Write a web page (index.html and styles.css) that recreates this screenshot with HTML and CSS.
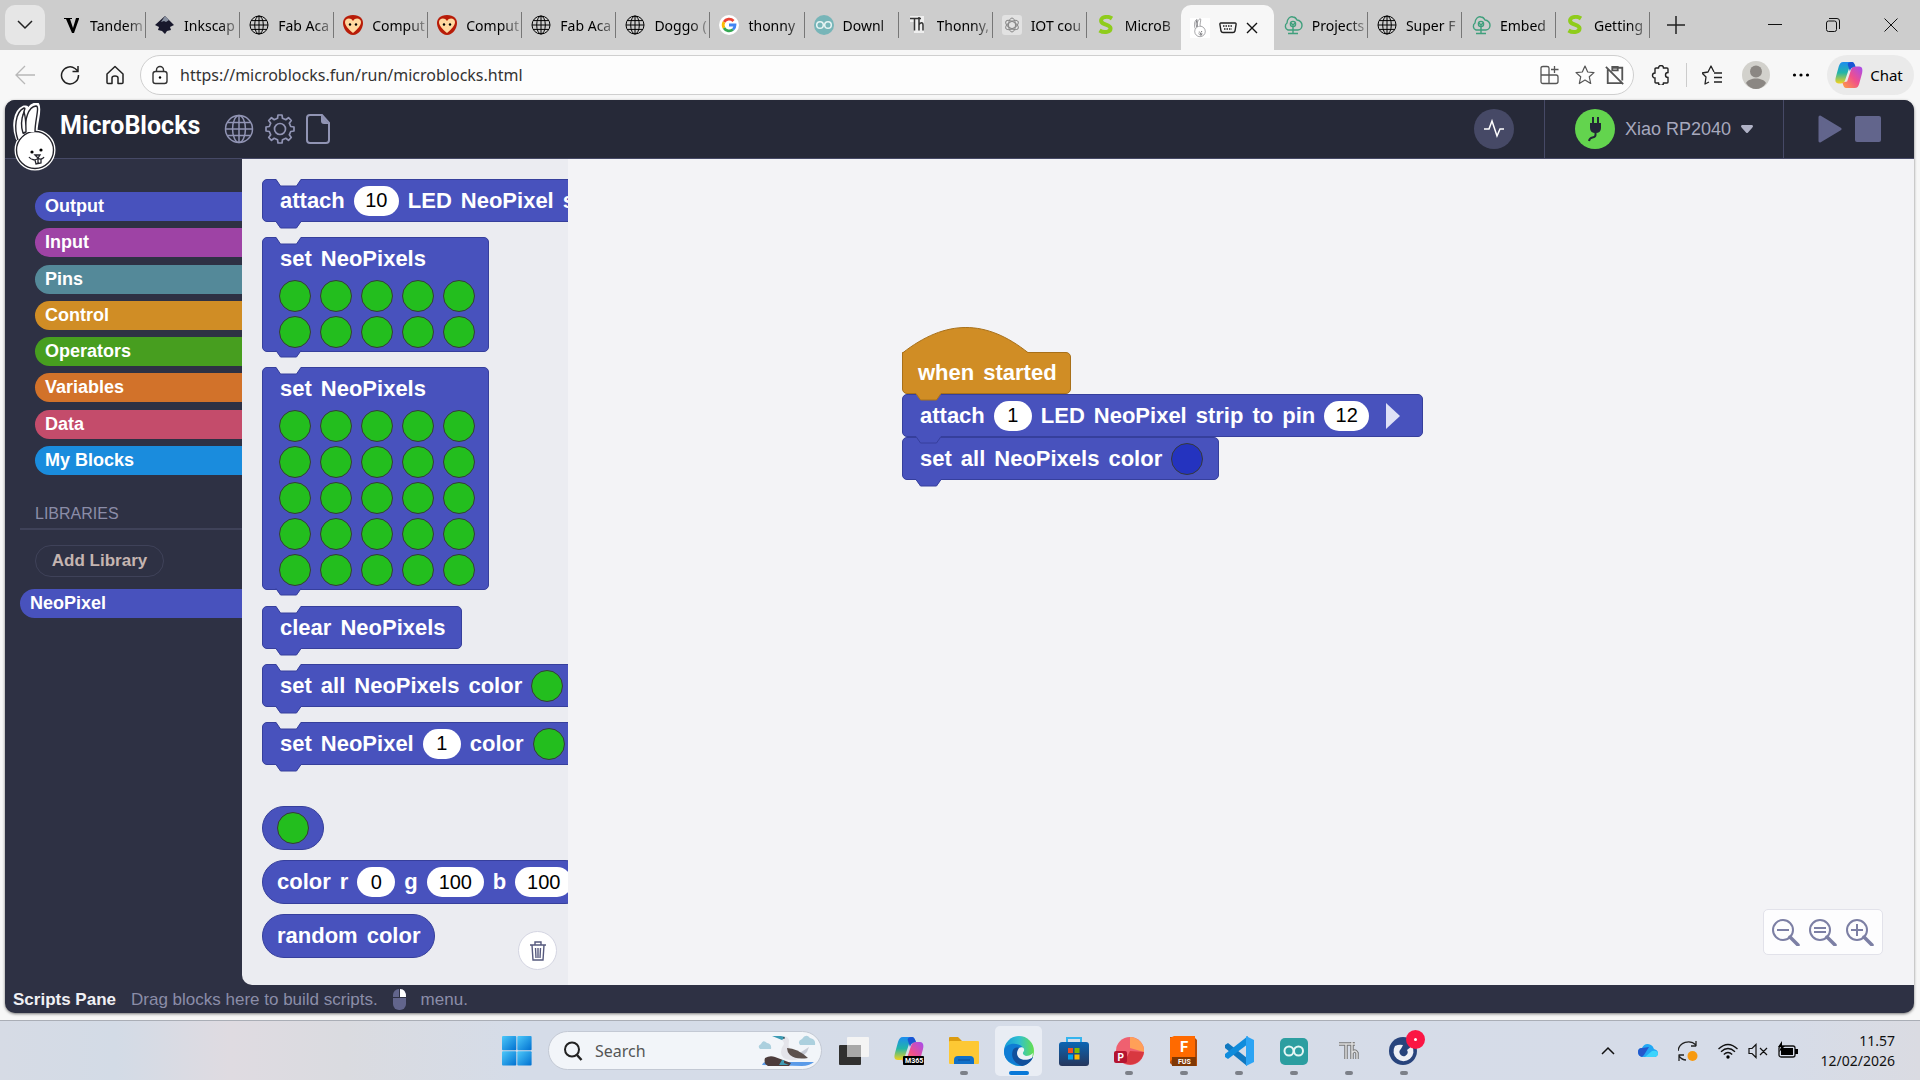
FILE: index.html
```
<!DOCTYPE html>
<html lang="en">
<head>
    <meta charset="UTF-8">
    <meta name="viewport" content="width=device-width, initial-scale=1.0">
    <title>MicroBlocks</title>
    <link rel="stylesheet" href="styles.css">
</head>
<body>
    <!-- shared icon shapes -->
    <svg class="defs" aria-hidden="true">
        <symbol id="globe" viewBox="0 0 20 20"><g fill="none" stroke="currentColor"><circle cx="10" cy="10" r="9"/><ellipse cx="10" cy="10" rx="4.3" ry="9"/><path d="M10 1v18M1 10h18M2.2 5.6h15.6M2.2 14.4h15.6"/></g></symbol>
        <symbol id="heart" viewBox="0 0 20 20"><path d="M10 0C3 0 0 4 0 8c0 5 4 12 10 12s10-7 10-12c0-4-3-8-10-8z" fill="#b81c08"/><path d="M10 18C5 14 2 10 2 7c0-4 6-5 8-1 2-4 8-3 8 1 0 3-3 7-8 11z" fill="#ffd9a0"/><circle cx="7" cy="9.5" r="1.2"/><circle cx="13" cy="9.5" r="1.2"/></symbol>
        <symbol id="tree" viewBox="0 0 20 20"><g fill="none" stroke="#3f9f7c" stroke-width="1.4"><path d="M5 15a4 4 0 0 1-1-7C4 4 7 1 10 2c2 0 3 1 4 3 3 0 5 3 5 5s-1 5-4 5z"/><circle cx="10" cy="9" r="2.6"/><path d="M10 9v10M5 18.5h10M8 8l2 2 2-2"/></g></symbol>
        <symbol id="s-logo" viewBox="0 0 20 20"><path d="M16 3.500C13 1.500 11 1.500 9 2 5.500 2.500 4.500 5 5.500 7c1.500 3 8.500 2.500 9 6 .4 4-6 5.500-11 2.500" fill="none" stroke="#8fcc1c" stroke-width="4"/></symbol>
        <symbol id="copilot" viewBox="0 0 30 30"><path d="M9 1h9c2 0 3 2 4 6l-7 1-4 12c-1 3-2 4-5 4H4c-4 0-4-3-3-7L4 6c1-3 2-5 5-5z" fill="url(#cpBlue)"/><path d="M21 29h-9c-2 0-3-2-4-6l5-1 4-12c1-3 2-4 5-4h4c3 0 4 3 3 7l-3 11c-1 3-2 5-5 5z" fill="url(#cpPink)"/><path d="M18 1c2 0 3 2 4 5-4 0-5 2-6 5l-2-6c-1-3 1-4 4-4z" fill="#1a55d4"/></symbol>
        <symbol id="mag" viewBox="0 0 28 28"><circle cx="11" cy="12" r="10" fill="none" stroke="currentColor" stroke-width="2"/><path d="M18 19l8 8" stroke="currentColor" stroke-width="3.500" stroke-linecap="round"/></symbol>
        <symbol id="bunny" viewBox="0 0 44 70">
            <g fill="#fff" stroke="#fff" stroke-width="5" stroke-linejoin="round"><path d="M5 35C1 24 2 9 11 5l2 0 1 8c2-8 6-11 10-11 3 5-2 17-2 27z"/><circle cx="22" cy="47" r="18"/></g>
            <g fill="#fff" stroke="#25252d" stroke-width="1.400" stroke-linejoin="round"><circle cx="22" cy="47" r="18.500"/><path d="M5 37C1 26 2 9 11 5c2 0 0 2 0 4-3 8-2 14 0 22M12 29C12 16 15 4 23 3c4 0-1 14-1 26"/><path d="M11 9c2 6 2 14 2 20l-3 1C7 21 9 14 11 9z"/></g>
            <circle cx="19" cy="49" r="1.600"/><circle cx="28" cy="47" r="1.600"/><path d="M16 54c2 3 7 4 9 1 2 2 5 1 6-1M22 52l3 3 2-3zM22 57l1 4 5-1v-4M25 55v5" fill="none" stroke="#25252d" stroke-width="1.300"/>
        </symbol>
        <symbol id="tab" viewBox="0 0 27 8"><path d="M1 0v1l4.500 6h16L26 1V0z" fill="var(--fill)"/><path d="M1 .5L5.500 7h16L26 .5" fill="none" stroke="var(--edge)"/></symbol>
        <symbol id="notch" viewBox="0 0 27 8"><path d="M1 0L5.500 7h16L26 0z" fill="#ebecf1"/><path d="M1 .5L5.500 7h16L26 .5" fill="none" stroke="var(--edge)"/></symbol>
        <linearGradient id="cpBlue" x1="0" y1="0" x2="0" y2="1"><stop offset="0" stop-color="#1c8cf0"/><stop offset=".5" stop-color="#22b5a8"/><stop offset="1" stop-color="#f4d21c"/></linearGradient>
        <linearGradient id="cpPink" x1="1" y1="0" x2="0" y2="1"><stop offset="0" stop-color="#a44cf0"/><stop offset=".5" stop-color="#f0508c"/><stop offset="1" stop-color="#ffa040"/></linearGradient>
        <linearGradient id="winBlue" x1="0" y1="0" x2="1" y2="1"><stop offset="0" stop-color="#4cc8fa"/><stop offset="1" stop-color="#0070d0"/></linearGradient>
        <linearGradient id="edgeTop" x1="0" y1="0" x2="1" y2="0"><stop offset="0" stop-color="#1598d8"/><stop offset=".5" stop-color="#30c0d0"/><stop offset="1" stop-color="#66e04c"/></linearGradient>
        <linearGradient id="storeBg" x1="0" y1="0" x2="0" y2="1"><stop offset="0" stop-color="#0a65b4"/><stop offset="1" stop-color="#26365c"/></linearGradient>
    </svg>

    <div class="tabstrip">
        <button class="tab-menu" aria-label="Tab actions"><svg width="18" height="12" viewBox="0 0 18 12"><path d="M2 2l7 7 7-7" fill="none" stroke="#222" stroke-width="1.500"/></svg></button>
        <nav class="tabs">
            <button class="tab"><svg viewBox="0 0 20 20"><path d="M3 3h8v1H9l3 9 3-10h3v1l-5 14h-2L5 4H3z"/></svg><span>Tandem</span></button>
            <button class="tab"><svg viewBox="0 0 20 20"><path d="M10 1l9 9-4 2 1 3-4 1-2 3-3-3-4-1 1-3-4-2z" fill="#18182c"/><path d="M10 1l4 4-3 2-2-1-3 1z" fill="#8890a0"/></svg><span>Inkscap</span></button>
            <button class="tab"><svg><use href="#globe"/></svg><span>Fab Aca</span></button>
            <button class="tab"><svg><use href="#heart"/></svg><span>Comput</span></button>
            <button class="tab"><svg><use href="#heart"/></svg><span>Comput</span></button>
            <button class="tab"><svg><use href="#globe"/></svg><span>Fab Aca</span></button>
            <button class="tab"><svg><use href="#globe"/></svg><span>Doggo (</span></button>
            <button class="tab"><svg viewBox="0 0 20 20"><circle cx="10" cy="10" r="10" fill="#fff"/><g fill="none" stroke-width="2.800"><path d="M14.500 6A6 6 0 0 0 5 7" stroke="#ea4335"/><path d="M5 7a6 6 0 0 0 0 6" stroke="#fbbc05"/><path d="M5 13a6 6 0 0 0 9 1.500" stroke="#34a853"/><path d="M14 14.500A6 6 0 0 0 16 10h-6" stroke="#4285f4"/></g></svg><span>thonny</span></button>
            <button class="tab"><svg viewBox="0 0 20 20"><circle cx="10" cy="10" r="10" fill="#77b5b8"/><g fill="none" stroke="#e8f4f4" stroke-width="1.500"><circle cx="6" cy="10" r="3.300"/><circle cx="14" cy="10" r="3.300"/></g></svg><span>Downl</span></button>
            <button class="tab"><svg viewBox="0 0 20 20"><path d="M2 1h14v17H6V7H2z" fill="#eee"/><path d="M2 3.500h11M6.500 3.500v12M11 2v13.500M11 10c1-3 4-3 4 0v5.500" fill="none" stroke="#333" stroke-width="1.500"/></svg><span>Thonny,</span></button>
            <button class="tab"><svg viewBox="0 0 20 20"><rect width="20" height="20" rx="3" fill="#e2e2e2"/><g fill="none" stroke="#888"><ellipse cx="10" cy="10" rx="3.500" ry="7"/><ellipse cx="10" cy="10" rx="3.500" ry="7" transform="rotate(60 10 10)"/><ellipse cx="10" cy="10" rx="3.500" ry="7" transform="rotate(120 10 10)"/></g></svg><span>IOT cou</span></button>
            <button class="tab last"><svg><use href="#s-logo"/></svg><span>MicroB</span></button>
            <button class="tab active" aria-label="MicroBlocks, serial port open"><svg class="favicon"><use href="#bunny"/></svg><svg class="serial" viewBox="0 0 18 12"><path d="M2 1h14q1.500 0 1 2l-1 6q-.5 1.500-2 1.500H4q-1.500 0-2-1.500L1 3Q.5 1 2 1z" fill="none" stroke="#222" stroke-width="1.400"/><path d="M4 4h10M5 7h8" stroke="#222" stroke-width="1.500" stroke-dasharray="1.500 1"/></svg><svg class="close" viewBox="0 0 12 12"><path d="M1 1l10 10M11 1L1 11" stroke="#111" stroke-width="1.400"/></svg></button>
            <button class="tab"><svg><use href="#tree"/></svg><span>Projects</span></button>
            <button class="tab"><svg><use href="#globe"/></svg><span>Super F</span></button>
            <button class="tab"><svg><use href="#tree"/></svg><span>Embed</span></button>
            <button class="tab"><svg><use href="#s-logo"/></svg><span>Getting</span></button>
        </nav>
        <button class="new-tab" aria-label="New tab"><svg width="18" height="18" viewBox="0 0 18 18"><path d="M9 0v18M0 9h18" stroke="#222" stroke-width="1.500"/></svg></button>
        <div class="window-buttons">
            <button aria-label="Minimize"><svg width="14" height="14" viewBox="0 0 14 14"><path d="M0 6.500h14" stroke="#111"/></svg></button>
            <button aria-label="Restore"><svg width="14" height="14" viewBox="0 0 14 14"><g fill="none" stroke="#111"><rect x=".5" y="3" width="10" height="10.500" rx="2"/><path d="M3 .5h8q2.500 0 2.500 2.500v8"/></g></svg></button>
            <button aria-label="Close"><svg width="14" height="14" viewBox="0 0 14 14"><path d="M.5.5l13 13M13.500.5l-13 13" stroke="#111"/></svg></button>
        </div>
    </div>

    <div class="toolbar">
        <button class="nav-btn" aria-label="Back"><svg viewBox="0 0 20 20"><path d="M20 10H1M10 1l-9 9 9 9" fill="none" stroke="#b8b8b8" stroke-width="1.300"/></svg></button>
        <button class="nav-btn" aria-label="Refresh"><svg viewBox="0 0 20 20"><path d="M18.500 10A8.500 8.500 0 1 1 15 3.500L18 6M18 1v5.500h-5.500" fill="none" stroke="#222" stroke-width="1.500"/></svg></button>
        <button class="nav-btn" aria-label="Home"><svg viewBox="0 0 20 20"><path d="M2 9l8-7.500L18 9v8.500q0 1-1 1h-4V13q0-2-3-2t-3 2v5.500H3q-1 0-1-1z" fill="none" stroke="#222" stroke-width="1.500" stroke-linejoin="round"/></svg></button>
        <div class="address">
            <svg viewBox="0 0 20 20"><g fill="none" stroke="#333" stroke-width="1.400"><rect x="3" y="6.500" width="14" height="12" rx="2.500"/><path d="M6.500 6.500V5a3.500 3.500 0 0 1 7 0v1.500"/></g><circle cx="10" cy="12.500" r="1.200"/></svg>
            <input type="text" aria-label="Address" value="https://microblocks.fun/run/microblocks.html">
            <svg viewBox="0 0 20 20"><path d="M9 18.500H3q-2 0-2-2V3q0-1.500 2-1.500h4q2 0 2 1.500zM1 10h15q2 0 2 2v4.500q0 2-2 2H9M14.500 1v7M11 4.500h7.500" fill="none" stroke="#555" stroke-width="1.300"/></svg>
            <svg class="star" viewBox="0 0 20 20"><path d="M10 1l2.700 6 6.300.600-4.700 4.200 1.400 6.700L10 15l-5.700 3.500 1.400-6.700L1 7.600 7.300 7z" fill="none" stroke="#555" stroke-width="1.200" stroke-linejoin="round"/></svg>
            <svg viewBox="0 0 22 22"><path d="M3 5v15h15M8 3h11v14M1 2l19 19M8 2h6v4H8z" fill="none" stroke="#555" stroke-width="2"/></svg>
        </div>
        <div class="tools">
            <svg viewBox="0 0 20 20"><path d="M5 3h2.500a2.500 2.500 0 0 1 5 0H16q1 0 1 1v3.500a2 2 0 0 0 0 5V17q0 1-1 1h-3.500a2.500 2.500 0 0 1-5 0H5q-1 0-1-1v-4a2.500 2.500 0 0 1 0-5V4q0-1 1-1z" fill="none" stroke="#222" stroke-width="1.400"/></svg>
            <i class="rule"></i>
            <svg viewBox="0 0 20 20"><path d="M7 17l-4 2 1-7-4-4 6-1 3-6 3 6M12 8h8M12 12.500h8M12 17h8" fill="none" stroke="#222" stroke-width="1.300" stroke-linejoin="round"/></svg>
            <svg class="avatar" viewBox="0 0 28 28"><circle cx="14" cy="14" r="14" fill="#d2d1cc"/><circle cx="14" cy="10.500" r="6" fill="#8b8783"/><path d="M4 22c3-6 17-6 20 0-5 8-15 8-20 0z" fill="#8b8783"/></svg>
            <svg viewBox="0 0 20 20"><circle cx="3.500" cy="10" r="1.600"/><circle cx="10" cy="10" r="1.600"/><circle cx="16.500" cy="10" r="1.600"/></svg>
        </div>
        <button class="chat"><svg width="28" height="28"><use href="#copilot"/></svg>Chat</button>
    </div>

    <main class="app">
        <header class="topbar">
            <svg class="logo"><use href="#bunny"/></svg>
            <h1>MicroBlocks</h1>
            <div class="menu-icons">
                <button aria-label="Language"><svg width="30" height="30"><use href="#globe"/></svg></button>
                <button aria-label="Settings"><svg width="30" height="30" viewBox="0 0 30 30"><g fill="none" stroke="currentColor" stroke-width="1.700" stroke-linejoin="round"><circle cx="15" cy="15" r="5.500"/><path d="M12.500 4.300L13 1h4l.5 3.300 3.300 1.400 2.700-2 2.800 2.800-2 2.700 1.400 3.300L29 13v4l-3.300.5-1.400 3.300 2 2.700-2.800 2.800-2.700-2-3.300 1.400L17 29h-4l-.5-3.300-3.300-1.400-2.700 2-2.800-2.800 2-2.700-1.400-3.300L1 17v-4l3.300-.5 1.400-3.300-2-2.700 2.800-2.800 2.700 2z"/></g></svg></button>
                <button aria-label="File"><svg width="24" height="30" viewBox="0 0 24 30"><path d="M4 1h12l7 8v17q0 3-3 3H4q-3 0-3-3V4q0-3 3-3z" fill="none" stroke="currentColor" stroke-width="2"/><path d="M15 1v6q0 3 3 3h5z" fill="currentColor"/></svg></button>
            </div>
            <div class="graph"><button class="round" aria-label="Graph"><svg width="24" height="24" viewBox="0 0 24 24"><path d="M2 12h5l3-8 5 15 3-7h4" fill="none" stroke="#fff" stroke-width="1.500"/></svg></button></div>
            <button class="board"><span class="round green"><svg width="20" height="26" viewBox="0 0 20 26"><path d="M8 1v6M13 1v6M10.500 16v3q0 2-3 2.500T4 25" fill="none" stroke="#222638" stroke-width="2"/><path d="M5 7h11v5q0 5-5.500 5T5 12z" fill="#222638"/></svg></span>Xiao RP2040<svg width="12" height="8" viewBox="0 0 12 8"><path d="M1 0h10q2 1 0 3L7 7.500q-1 1-2 0L1 3Q-1 1 1 0z" fill="#b0b2c6"/></svg></button>
            <div class="run">
                <button aria-label="Start"><svg width="26" height="28" viewBox="0 0 26 28"><path d="M3 2l20 12L3 26z" fill="currentColor" stroke="currentColor" stroke-width="3" stroke-linejoin="round"/></svg></button>
                <button aria-label="Stop"><svg width="26" height="26" viewBox="0 0 26 26"><rect width="26" height="26" rx="2" fill="currentColor"/></svg></button>
            </div>
        </header>

        <div class="workspace">
            <aside class="sidebar">
                <div class="categories">
                    <button class="category output">Output</button>
                    <button class="category input">Input</button>
                    <button class="category pins">Pins</button>
                    <button class="category control">Control</button>
                    <button class="category operators">Operators</button>
                    <button class="category variables">Variables</button>
                    <button class="category data">Data</button>
                    <button class="category my-blocks">My Blocks</button>
                </div>
                <h2>LIBRARIES</h2>
                <button class="add-library">Add Library</button>
                <button class="category output">NeoPixel</button>
            </aside>

            <div class="panes">
                <section class="palette">
                    <div class="block"><svg class="notch"><use href="#notch"/></svg><span>attach</span><input class="num w2" aria-label="LED count" value="10"><span>LED</span><span>NeoPixel</span><span>s</span><svg class="peg"><use href="#tab"/></svg></div>
                    <div class="block tall"><svg class="notch"><use href="#notch"/></svg>
                        <div class="words"><span>set</span><span>NeoPixels</span></div>
                        <div class="pixels"><i></i><i></i><i></i><i></i><i></i><i></i><i></i><i></i><i></i><i></i></div>
                        <svg class="peg"><use href="#tab"/></svg></div>
                    <div class="block tall"><svg class="notch"><use href="#notch"/></svg>
                        <div class="words"><span>set</span><span>NeoPixels</span></div>
                        <div class="pixels"><i></i><i></i><i></i><i></i><i></i><i></i><i></i><i></i><i></i><i></i><i></i><i></i><i></i><i></i><i></i><i></i><i></i><i></i><i></i><i></i><i></i><i></i><i></i><i></i><i></i></div>
                        <svg class="peg"><use href="#tab"/></svg></div>
                    <div class="block"><svg class="notch"><use href="#notch"/></svg><span>clear</span><span>NeoPixels</span><svg class="peg"><use href="#tab"/></svg></div>
                    <div class="block"><svg class="notch"><use href="#notch"/></svg><span>set</span><span>all</span><span>NeoPixels</span><span>color</span><button class="color" aria-label="Color"></button><svg class="peg"><use href="#tab"/></svg></div>
                    <div class="block"><svg class="notch"><use href="#notch"/></svg><span>set</span><span>NeoPixel</span><input class="num w1" aria-label="Pixel" value="1"><span>color</span><button class="color" aria-label="Color"></button><svg class="peg"><use href="#tab"/></svg></div>
                    <div class="reporters">
                        <div class="block reporter"><button class="color" aria-label="Color"></button></div>
                        <div class="block reporter"><span>color</span><span>r</span><input class="num w1" aria-label="Red" value="0"><span>g</span><input class="num w3" aria-label="Green" value="100"><span>b</span><input class="num w3" aria-label="Blue" value="100"></div>
                        <div class="block reporter"><span>random</span><span>color</span></div>
                    </div>
                    <button class="trash" aria-label="Trash"><svg width="18" height="20" viewBox="0 0 18 20"><path d="M1 4h16M6 4V1h6v3M3 4l1 15h10l1-15M6.500 7l.5 10M9 7v10M11.500 7l-.5 10" fill="none" stroke="#56597e" stroke-width="1.400"/></svg></button>
                </section>

                <section class="scripts">
                    <div class="script">
                        <svg class="dome" width="127" height="26" viewBox="0 0 127 26"><path d="M.5 26C44-8 84-8 126.500 26z" fill="#d08d25"/><path d="M.5 26C44-8 84-8 126.500 26" fill="none" stroke="#a8701a"/></svg>
                        <div class="block hat"><span>when</span><span>started</span><svg class="peg"><use href="#tab"/></svg></div>
                        <div class="block"><span>attach</span><input class="num w1" aria-label="LED count" value="1"><span>LED</span><span>NeoPixel</span><span>strip</span><span>to</span><span>pin</span><input class="num w2" aria-label="Pin" value="12"><button class="expand" aria-label="More options"><svg width="14" height="26" viewBox="0 0 14 26"><path d="M0 0l14 13L0 26z" fill="#dfe1f6"/></svg></button><svg class="peg"><use href="#tab"/></svg></div>
                        <div class="block"><span>set</span><span>all</span><span>NeoPixels</span><span>color</span><button class="color blue" aria-label="Color"></button><svg class="peg"><use href="#tab"/></svg></div>
                    </div>
                    <div class="zoom">
                        <button aria-label="Zoom out"><svg viewBox="0 0 28 28"><use href="#mag"/><path d="M5 12h12" stroke="currentColor" stroke-width="2"/></svg></button>
                        <button aria-label="Reset zoom"><svg viewBox="0 0 28 28"><use href="#mag"/><path d="M5 10h12M5 14h12" stroke="currentColor" stroke-width="2"/></svg></button>
                        <button aria-label="Zoom in"><svg viewBox="0 0 28 28"><use href="#mag"/><path d="M5 12h12M11 6v12" stroke="currentColor" stroke-width="2"/></svg></button>
                    </div>
                </section>
            </div>
        </div>

        <footer class="status">
            <strong>Scripts Pane</strong>
            <span>Drag blocks here to build scripts.</span>
            <svg width="13" height="21" viewBox="0 0 13 21"><rect width="13" height="21" rx="6" fill="#62658c"/><path d="M7 0q6 0 6 8H7z" fill="#fff"/><path d="M0 8.500h13M6.500 0v8" stroke="#2e3144"/></svg>
            <span>menu.</span>
        </footer>
    </main>

    <div class="taskbar">
        <nav class="dock">
            <button class="dock-item" aria-label="Start"><svg viewBox="0 0 30 30"><g fill="url(#winBlue)"><rect width="14.300" height="14.300" rx="1"/><rect x="15.300" width="14.300" height="14.300" rx="1"/><rect y="15.300" width="14.300" height="14.300" rx="1"/><rect x="15.300" y="15.300" width="14.300" height="14.300" rx="1"/></g></svg></button>
            <div class="search">
                <svg width="20" height="20" viewBox="0 0 20 20"><circle cx="9" cy="8.500" r="7" fill="none" stroke="#222" stroke-width="2"/><path d="M14 14l4.500 5" stroke="#222" stroke-width="2.500"/></svg>
                <input type="text" aria-label="Search" placeholder="Search">
                <svg width="58" height="32" viewBox="0 0 58 32"><g fill="#acd0de"><path d="M2 14q-3-3 1-5 2-5 6-1 5 1 4 6zM42 10q-3-4 2-6 4-6 8-1 6 1 5 7z"/></g><path d="M4 30q1-3 4-3h48q-5 4-12 4z" fill="#5b9be8"/><path d="M7 23q5-3 10-1l16 6-2 3H10q-5-3-3-8z" fill="#4c3c3c"/><path d="M24 1q6 0 7 4c0 5-2 6 3 10l8 8q-5 3-10 2-9-1-9-8 0-4 3-8 0-3-4-5z" fill="#e4e4ea"/><path d="M40 19l11-7-2 5-5 5z" fill="#c8ccd6"/><path d="M29 13q10 0 21 10-12 2-18-3-3-3-3-7z" fill="#5c504c"/><path d="M14 1h9l4 1-3 3zM24 25h2v3l5 2H21z" fill="#3d9bb4"/><circle cx="26" cy="3" r=".7"/></svg>
            </div>
            <button class="dock-item" aria-label="Task view"><svg viewBox="0 0 30 30"><rect y="9" width="22" height="20" rx="1" fill="#30302f"/><rect x="8" y="1" width="22" height="20" rx="1" fill="#f4f4f4"/><path d="M8 9h14v12H8z" fill="#a8a8a8"/></svg></button>
            <button class="dock-item" aria-label="Microsoft 365 Copilot"><svg viewBox="0 0 30 30"><use href="#copilot"/><rect x="9" y="20" width="21" height="9" rx="1"/><text x="11" y="27" class="m365">M365</text></svg></button>
            <button class="dock-item open" aria-label="File Explorer"><svg viewBox="0 0 30 30"><path d="M0 2q0-1 1-1h8l4 4v5H0z" fill="#dc9c10"/><rect y="5" width="30" height="23" rx="1" fill="#fdc834"/><path d="M5 28v-4q0-4 4-4h12q4 0 4 4v4z" fill="#1070c8"/><path d="M9 24h12" stroke="#0a4a94"/></svg></button>
            <button class="dock-item open current" aria-label="Edge"><svg viewBox="0 0 30 30"><circle cx="15" cy="15" r="15" fill="url(#edgeTop)"/><path d="M0 15C1 6 16 6 19 12c-5-1-6 3-4 7 3 5 9 5 14 2-4 9-13 11-20 7C3 26 0 21 0 15z" fill="#0f7cd4"/><path d="M9 14c-3 7 2 14 9 16 5-1 9-4 11-9-7 4-15 2-15-4 0-2 1-3 1-5-3-1-5 0-6 2z" fill="#12509c"/><path d="M15 12c3-2 6 0 5 3-2 2-1 4 2 5 3 0 5-1 7-3l-1 5c-8 4-15 1-15-5 0-2 1-3 2-5z" fill="#edf1f6"/></svg></button>
            <button class="dock-item" aria-label="Store"><svg viewBox="0 0 30 30"><path d="M8 7V2h14v5" fill="none" stroke="#35b4ee" stroke-width="2"/><rect x="0" y="6" width="30" height="24" rx="3" fill="url(#storeBg)"/><path d="M9 12h5v5H9z" fill="#f25022"/><path d="M15.500 12h5v5h-5z" fill="#7fba00"/><path d="M9 18.500h5v5H9z" fill="#00a4ef"/><path d="M15.500 18.500h5v5h-5z" fill="#ffb900"/></svg></button>
            <button class="dock-item open" aria-label="PowerPoint"><svg viewBox="0 0 30 30"><circle cx="16" cy="15" r="14" fill="#ef6070"/><path d="M16 1a14 14 0 0 1 14 15L16 12z" fill="#ffa058"/><path d="M16 15l14 1a14 14 0 0 1-20 11z" fill="#d83840"/><rect y="15" width="13" height="12" rx="2" fill="#b41430"/><text x="3.500" y="25" class="letter">P</text></svg></button>
            <button class="dock-item open" aria-label="Fusion"><svg viewBox="0 0 30 30"><path d="M1 1h24l3 3v26H4l-3-3z" fill="#b04c0c"/><path d="M1 2l4-2h21v21H5l-4 5z" fill="#ff6a00"/><rect x="3" y="21" width="24" height="9" fill="#803804"/><text x="11" y="16" class="letter fusion">F</text><text x="9" y="28" class="m365">FUS</text></svg></button>
            <button class="dock-item open" aria-label="Visual Studio Code"><svg viewBox="0 0 30 30"><path d="M1 9l3-2 19 15v8L1 12z" fill="#1078c0"/><path d="M1 21l3 2L24 8V0L1 18z" fill="#0f8cdc"/><path d="M22 0l8 4v22l-8 4z" fill="#2ca4f4"/></svg></button>
            <button class="dock-item open" aria-label="Arduino IDE"><svg viewBox="0 0 30 30"><rect x="1" y="2" width="28" height="27" rx="5" fill="#2c9ea0"/><g fill="none" stroke="#e4f6f4" stroke-width="2"><circle cx="10" cy="15" r="4.500"/><circle cx="19.500" cy="15" r="4.500"/></g></svg></button>
            <button class="dock-item open" aria-label="Thonny"><svg viewBox="0 0 30 30"><path d="M5 8h16M12 8v15M18 6v17M18 17q3-4 5 0v6" fill="none" stroke="#777" stroke-width="3.500"/><path d="M5 8h16M12 8v15M18 6v17M18 17q3-4 5 0v6" fill="none" stroke="#ddd" stroke-width="1.500"/></svg></button>
            <button class="dock-item open" aria-label="Recorder"><svg viewBox="0 0 30 30"><circle cx="14" cy="15" r="14" fill="#28447c"/><path d="M6 10a10 10 0 1 0 17 0l-5 4a4 4 0 1 1-6-1l2-4q-4-1-8 1z" fill="#eef0f6"/><circle cx="14.500" cy="15" r="3" fill="#28447c"/></svg><i class="badge"></i></button>
        </nav>
        <div class="tray">
            <svg class="chevron" width="14" height="20" viewBox="0 0 14 20"><path d="M1 13l6-6 6 6" fill="none" stroke="#111" stroke-width="1.500"/></svg>
            <svg class="wide" viewBox="0 0 20 20"><path d="M4 16q-4-1-4-5 0-4 4-4 3-6 9-3 2 1 3 4 4 1 4 4t-3 4z" fill="#22a8f4"/><path d="M4 16q-4-1-4-5 0-4 4-4l7-1-5 8z" fill="#2458cc"/><path d="M7 16l7-6q6-1 6 3 0 2-3 3z" fill="#3cd4fc"/></svg>
            <svg class="wide" viewBox="0 0 20 20"><path d="M0 10C1 1 12-2 18 4v-4M18 5h-5M8 19q-4 0-7-4v5M1 14h5" fill="none" stroke="#222" stroke-width="1.300"/><circle cx="14.500" cy="15" r="5" fill="#f79a10"/></svg>
            <svg class="wide tight" viewBox="0 0 20 20"><g fill="none" stroke="#111" stroke-width="1.300"><path d="M.5 8q9.500-9 19 0M3 10.800q7-6.500 14 0M5.800 13.500q4.200-4 8.400 0"/></g><circle cx="10" cy="16" r="1.700"/></svg>
            <svg class="wide tight" viewBox="0 0 20 20"><path d="M1 7.500h3l4-4v13l-4-4H1zM12 7l7 7M19 7l-7 7" fill="none" stroke="#111" stroke-width="1.200"/></svg>
            <svg class="wide" viewBox="0 0 20 20"><rect x="1" y="5" width="16" height="11" rx="2" fill="none" stroke="#111" stroke-width="1.300"/><rect x="3" y="7" width="12" height="7"/><path d="M17 8h3v5h-3zM4 0L0 6h3L1 11l6-6H4z"/></svg>
            <div class="clock"><time>11.57</time><time>12/02/2026</time></div>
        </div>
    </div>
</body>
</html>
```
FILE: styles.css
```
* {
    box-sizing: border-box;
}
body {
    margin: 0;
    height: 100vh;
    display: flex;
    flex-direction: column;
    overflow: hidden;
    background: #f7f7f7;
    font-family: "Liberation Sans", Arial, sans-serif;
}
button {
    font: inherit;
    color: inherit;
    background: none;
    border: none;
    padding: 0;
    display: flex;
    align-items: center;
    justify-content: center;
}
input {
    font: inherit;
    border: none;
    background: none;
    outline: none;
    padding: 0;
    min-width: 0;
}
svg {
    display: block;
    flex: none;
}
.defs {
    position: absolute;
    width: 0;
    height: 0;
}

/* browser chrome */
.tabstrip, .toolbar, .taskbar {
    font-family: "Noto Sans", "Open Sans", sans-serif;
    display: flex;
    align-items: center;
    flex: none;
}
.tabstrip {
    height: 50px;
    background: #cdcdcd;
    padding-left: 5px;
    font-size: 14px;
}
.tab-menu {
    width: 40px;
    height: 40px;
    flex: none;
    border-radius: 10px;
    background: #e6e6e6;
    margin-right: 7px;
}
.tabs {
    display: flex;
    flex: 0 1 1598px;
    min-width: 0;
    height: 50px;
    align-items: center;
}
.tab {
    flex: 1 1 0;
    min-width: 0;
    height: 26px;
    padding-left: 9px;
    gap: 9px;
    justify-content: flex-start;
    border-right: 1px solid #777;
}
.tab svg {
    width: 20px;
    height: 20px;
}
.tab span {
    flex: 1;
    min-width: 0;
    text-align: left;
    overflow: hidden;
    white-space: nowrap;
    mask-image: linear-gradient(to right, #000 65%, #0003);
}
.tab.last {
    border-color: transparent;
}
.tab.active {
    height: 45px;
    align-self: flex-end;
    background: #f7f7f7;
    border: none;
    border-radius: 10px 10px 0 0;
}
.tab .serial {
    width: 18px;
    height: 12px;
}
.tab .close {
    width: 12px;
    height: 12px;
}
.tab .favicon {
    background: #fff;
}
.new-tab {
    width: 52px;
    height: 40px;
}
.window-buttons {
    display: flex;
    margin-left: auto;
}
.window-buttons button {
    width: 58px;
    height: 50px;
}
.toolbar {
    height: 50px;
    padding: 0 6px 0 2px;
    font-size: 16px;
}
.nav-btn {
    width: 45px;
    height: 40px;
}
.nav-btn svg, .address svg, .tools svg {
    width: 20px;
    height: 20px;
}
.address {
    flex: 1;
    height: 40px;
    border: 1px solid #cfcfcf;
    border-radius: 20px;
    background: #fdfdfd;
    display: flex;
    align-items: center;
    gap: 10px;
    padding: 0 8px 0 9px;
    margin-left: 3px;
}
.address input {
    flex: 1;
    color: #333;
}
.address .star {
    margin-left: 5px;
}
.tools {
    display: flex;
    align-items: center;
    gap: 15px;
    padding: 0 16px 0 17px;
}
.tools .avatar {
    width: 28px;
    height: 28px;
    margin: 0 6px 0 5px;
}
.rule {
    width: 1px;
    height: 24px;
    background: #ccc;
}
.chat {
    width: 87px;
    height: 40px;
    border-radius: 20px;
    background: #eaeaea;
    gap: 7px;
    padding-right: 3px;
    font-size: 15px;
}

/* MicroBlocks */
.app {
    flex: 1;
    min-height: 0;
    margin: 0 6px 7px 5px;
    border-radius: 10px;
    background: #2e3144;
    box-shadow: 0 1px 3px #777;
    display: flex;
    flex-direction: column;
}
.topbar {
    height: 59px;
    flex: none;
    background: #262938;
    border-bottom: 1px solid #464966;
    border-radius: 10px 10px 0 0;
    display: flex;
    align-items: center;
    padding-left: 8px;
    color: #9194b4;
}
.logo {
    width: 44px;
    height: 70px;
    align-self: flex-start;
    margin: 3px 0 -14px;
    z-index: 1;
}
.topbar h1 {
    margin: 0 24px 8px 3px;
    color: #fff;
    font: bold 25px Roboto, sans-serif;
}
.menu-icons {
    display: flex;
    gap: 11px;
}
.graph {
    margin-left: auto;
    padding-right: 30px;
}
.round {
    width: 40px;
    height: 40px;
    border-radius: 50%;
    background: #464966;
    display: flex;
    align-items: center;
    justify-content: center;
}
.round.green {
    background: #63d44e;
}
.board {
    width: 240px;
    height: 58px;
    border: solid #464966;
    border-width: 0 1px;
    gap: 10px;
    font-size: 18px;
    color: #a6a8bd;
}
.run {
    display: flex;
    align-items: center;
    gap: 12px;
    padding: 0 33px;
    color: #62658c;
}
.workspace {
    flex: 1;
    min-height: 0;
    display: flex;
}
.sidebar {
    width: 237px;
    padding: 33px 0 0 15px;
    display: flex;
    flex-direction: column;
    align-items: stretch;
}
.categories {
    height: 283px;
    padding-left: 15px;
    display: flex;
    flex-direction: column;
    justify-content: space-between;
}
.category {
    height: 29px;
    padding-left: 10px;
    border-radius: 15px 0 0 15px;
    justify-content: flex-start;
    color: #fff;
    font-weight: bold;
    font-size: 18px;
}
.output { background: #4852bd; }
.input { background: #9e43a5; }
.pins { background: #548999; }
.control { background: #d08d25; }
.operators { background: #479e1f; }
.variables { background: #d2722a; }
.data { background: #c44c6b; }
.my-blocks { background: #1a8cdd; }
.sidebar h2 {
    margin: 30px 0 15px;
    padding: 0 0 5px 15px;
    border-bottom: 2px solid #3f4259;
    color: #8b8da8;
    font-size: 16px;
    line-height: 18px;
    font-weight: normal;
}
.add-library {
    width: 129px;
    height: 32px;
    margin: 0 0 12px 15px;
    border: 1px solid #3f4259;
    border-radius: 16px;
    color: #c5b5b1;
    font-weight: bold;
    font-size: 17px;
}
.panes {
    flex: 1;
    min-width: 0;
    display: flex;
    overflow: hidden;
    border-radius: 0 0 0 10px;
}
.palette {
    position: relative;
    width: 326px;
    padding: 20px 0 0 20px;
    overflow: hidden;
    background: #ebecf1;
    display: flex;
    flex-direction: column;
    align-items: flex-start;
    gap: 15px;
}
.scripts {
    position: relative;
    flex: 1;
    background: #f3f3f6;
}

/* blocks */
.block {
    --fill: #4852bd;
    --edge: #363f9c;
    position: relative;
    height: 43px;
    flex: none;
    display: flex;
    align-items: center;
    gap: 9px;
    padding: 0 15px 0 17px;
    border: 1px solid var(--edge);
    border-radius: 5px;
    background: var(--fill);
    color: #fff;
    font-weight: bold;
    font-size: 22px;
    white-space: nowrap;
}
.tall {
    height: auto;
    flex-direction: column;
    align-items: flex-start;
    gap: 0;
    padding: 0 13px 3px 16px;
}
.tall + .block:not(.tall) {
    margin-top: 1px;
}
.words {
    display: flex;
    align-items: center;
    gap: 9px;
    height: 42px;
    padding-left: 1px;
}
.pixels {
    display: grid;
    grid-template-columns: repeat(5, 32px);
    gap: 4px 9px;
}
.pixels i, .color {
    width: 32px;
    height: 32px;
    border-radius: 50%;
    border: 1px solid #363a3a;
    background: #23be1e;
}
.color.blue {
    background: #2433bf;
}
.notch, .peg {
    position: absolute;
    left: 12px;
    width: 27px;
    height: 8px;
}
.notch {
    top: -1px;
}
.peg {
    top: 41px;
    z-index: 1;
}
.tall .peg {
    top: calc(100% - 1px);
}
.num {
    height: 30px;
    border-radius: 15px;
    background: #fff;
    color: #000;
    font-weight: normal;
    font-size: 20px;
    text-align: center;
}
.w1 { width: 38px; }
.w2 { width: 45px; }
.w3 { width: 57px; }
.reporters {
    margin-top: 26px;
    display: flex;
    flex-direction: column;
    align-items: flex-start;
    gap: 10px;
}
.reporter {
    height: 44px;
    border-radius: 22px;
    padding: 0 14px;
}
.trash {
    position: absolute;
    right: 11px;
    bottom: 15px;
    width: 39px;
    height: 39px;
    border: 1px solid #d4d5e2;
    border-radius: 50%;
    background: #fff;
}
.script {
    position: absolute;
    left: 334px;
    top: 168px;
    display: flex;
    flex-direction: column;
    align-items: flex-start;
}
.dome {
    margin-bottom: -1px;
    z-index: 1;
}
.hat {
    --fill: #d08d25;
    --edge: #a8701a;
    height: 42px;
    border-top-left-radius: 0;
    padding: 0 13px 0 15px;
}
.hat .peg {
    top: 40px;
}
.expand {
    margin: 0 7px 0 8px;
}
.zoom {
    position: absolute;
    right: 31px;
    bottom: 30px;
    padding: 8px;
    border: 1px solid #e2e2ea;
    border-radius: 5px;
    background: #fdfdfe;
    color: #7c7fa4;
    display: flex;
    gap: 9px;
}
.zoom svg {
    width: 28px;
    height: 28px;
}
.status {
    height: 28px;
    flex: none;
    padding: 1px 0 0 8px;
    display: flex;
    align-items: center;
    gap: 15px;
    font-size: 17px;
    color: #8b8da8;
}
.status strong {
    color: #f0f0f4;
}

/* taskbar */
.taskbar {
    height: 60px;
    border-top: 1px solid #aaaeb6;
    background: linear-gradient(to right, #d6dbe5, #d3dbe6 6%, #dfdbe1 12%, #dadbe0 18%, #d5dce8 27%, #d6dce8 93%, #dadbe2);
    display: grid;
    grid-template-columns: 1fr auto 1fr;
}
.dock {
    grid-column: 2;
    display: flex;
    align-items: center;
    height: 59px;
}
.dock-item {
    position: relative;
    width: 55px;
    height: 50px;
}
.dock-item svg {
    width: 30px;
    height: 30px;
}
.open::after {
    content: "";
    position: absolute;
    bottom: 1px;
    width: 8px;
    height: 4px;
    border-radius: 2px;
    background: #7c8088;
}
.current {
    width: 47px;
    margin: 0 4px;
    border-radius: 5px;
    background: #e9edf4;
}
.current::after {
    width: 20px;
    background: #0878d8;
}
.badge {
    position: absolute;
    top: 4px;
    right: 6px;
    width: 19px;
    height: 19px;
    border-radius: 50%;
    border: 8px solid #fb1644;
    background: #fff;
}
.m365 {
    font: bold 7px Roboto, sans-serif;
    fill: #fff;
}
.letter {
    font: bold 10px Roboto, sans-serif;
    fill: #fff;
}
.fusion {
    font-size: 15px;
}
.search {
    width: 274px;
    height: 39px;
    margin: 0 4px;
    padding: 0 5px 0 14px;
    border: 1px solid #c3c9d4;
    border-radius: 20px;
    background: #f2f5f9;
    display: flex;
    align-items: center;
    gap: 12px;
    font-size: 16px;
}
.search .dock-item svg {
    width: 58px;
}
.search input {
    flex: 1;
}
.search input::placeholder {
    color: #555;
}
.tray {
    grid-column: 3;
    justify-self: end;
    display: flex;
    align-items: center;
    gap: 20px;
    padding-right: 25px;
}
.tray .wide {
    width: 20px;
    height: 20px;
}
.tray .tight {
    margin-right: -10px;
}
.tray .chevron {
    margin-right: 3px;
}
.clock {
    width: 77px;
    display: flex;
    flex-direction: column;
    align-items: flex-end;
    font-size: 14px;
    line-height: 20px;
    color: #111;
}
```
